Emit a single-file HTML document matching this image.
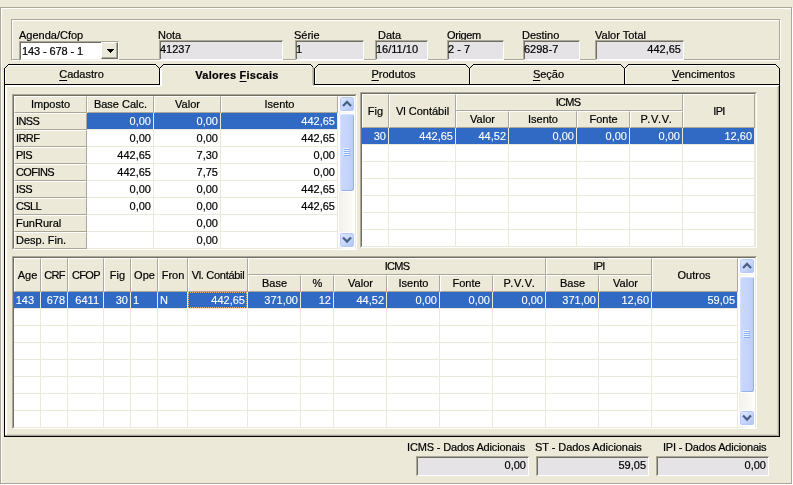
<!DOCTYPE html>
<html><head><meta charset="utf-8"><title>Valores Fiscais</title>
<style>
html,body{margin:0;padding:0;background:#ECE9D8;}
body{width:793px;height:485px;background:#ECE9D8;position:relative;overflow:hidden;
font-family:"Liberation Sans",sans-serif;font-size:11px;color:#000;line-height:13px;will-change:transform;-webkit-text-stroke:0.2px;}
div{position:absolute;box-sizing:border-box;white-space:nowrap;}
.t{height:13px;}
.fld{background:#E6E3E6;border-top:2px solid;border-left:2px solid;border-right:1px solid #fff;border-bottom:1px solid #fff;
border-top-color:#ACA899;border-left-color:#ACA899;}
.fld i{position:absolute;left:-1px;top:-1px;right:0;bottom:0;border-top:1px solid #716F64;border-left:1px solid #716F64;}
.fld span{position:absolute;top:1px;font-style:normal;}
.hd{background:#ECE9D8;border-top:1px solid #fff;border-left:1px solid #fff;border-right:1px solid #ACA899;border-bottom:1px solid #ACA899;text-align:center;}
.c{background:#fff;border-right:1px solid #ECE9D8;border-bottom:1px solid #ECE9D8;text-align:right;padding-right:2px;line-height:17px;}
.cs{-webkit-text-stroke:0.1px;background:#316AC5;color:#fff;border-right:1px solid #ECE9D8;border-bottom:1px solid #ECE9D8;text-align:right;padding-right:2px;line-height:17px;}
.l{text-align:left;padding-left:2px;}
.fx{background:#ECE9D8;border-right:1px solid #ACA899;border-bottom:1px solid #ACA899;border-top:1px solid #fff;border-left:1px solid #fff;text-align:left;padding-left:1px;line-height:14px;}
u{text-decoration:underline;text-underline-offset:2px;text-decoration-thickness:1px;}
</style></head><body>

<div style="left:1px;top:8px;width:792px;height:477px;border:1px solid #fff;"></div>
<div style="left:0px;top:7px;width:792px;height:477px;border:1px solid #ACA899;"></div>
<div style="left:12px;top:20px;width:769px;height:41px;border:1px solid #fff;"></div>
<div style="left:11px;top:19px;width:769px;height:41px;border:1px solid #ACA899;"></div>
<div class="t" style="left:19px;top:29px;">Agenda/Cfop</div>
<div style="left:19px;top:41px;width:100px;height:20px;background:#fff;border-top:1px solid #ACA899;border-left:1px solid #ACA899;border-right:1px solid #fff;border-bottom:1px solid #fff;"></div>
<div style="left:20px;top:42px;width:98px;height:18px;border-top:1px solid #716F64;border-left:1px solid #716F64;border-right:1px solid #F1EFE2;border-bottom:1px solid #F1EFE2;"></div>
<div class="t" style="left:22px;top:45px;letter-spacing:-0.1px;">143 - 678 - 1</div>
<div style="left:101px;top:42px;width:17px;height:17px;background:#ECE9D8;border-top:1px solid #fff;border-left:1px solid #fff;border-right:1px solid #716F64;border-bottom:1px solid #716F64;"></div>
<div style="left:102px;top:43px;width:15px;height:15px;border-right:1px solid #ACA899;border-bottom:1px solid #ACA899;"></div>
<svg style="position:absolute;left:107px;top:49px" width="7" height="4" shape-rendering="crispEdges"><path d="M0 0h7v1h-7zM1 1h5v1h-5zM2 2h3v1h-3zM3 3h1v1h-1z" fill="#000"/></svg>
<div class="t" style="left:158px;top:29px;">Nota</div>
<div class="fld" style="left:159px;top:40px;width:124px;height:20px;"><i></i><span style="left:-1px">41237</span></div>
<div class="t" style="left:294px;top:29px;">Série</div>
<div class="fld" style="left:295px;top:40px;width:69px;height:20px;"><i></i><span style="left:-1px">1</span></div>
<div class="t" style="left:378px;top:29px;">Data</div>
<div class="fld" style="left:375px;top:40px;width:53px;height:20px;"><i></i><span style="left:-1px">16/11/10</span></div>
<div class="t" style="left:447px;top:29px;letter-spacing:-0.4px;">Origem</div>
<div class="fld" style="left:447px;top:40px;width:57px;height:20px;"><i></i><span style="left:-1px">2 - 7</span></div>
<div class="t" style="left:522px;top:29px;">Destino</div>
<div class="fld" style="left:523px;top:40px;width:57px;height:20px;"><i></i><span style="left:-1px">6298-7</span></div>
<div class="t" style="left:595px;top:29px;">Valor Total</div>
<div class="fld" style="left:595px;top:40px;width:89px;height:20px;"><i></i><span style="right:2px">442,65</span></div>
<div class="t" style="left:4px;top:68px;width:155px;height:13px;text-align:center;"><u>C</u>adastro</div>
<div class="t" style="left:160px;top:69px;width:154px;height:13px;text-align:center;font-weight:bold;letter-spacing:0.25px;">Valores <u>F</u>iscais</div>
<div class="t" style="left:316px;top:68px;width:155px;height:13px;text-align:center;"><u>P</u>rodutos</div>
<div class="t" style="left:471px;top:68px;width:155px;height:13px;text-align:center;"><u>S</u>eção</div>
<div class="t" style="left:626px;top:68px;width:155px;height:13px;text-align:center;"><u>V</u>encimentos</div>
<svg style="position:absolute;left:0;top:0" width="793" height="485" shape-rendering="crispEdges">
<rect x="8" y="64" width="148" height="1" fill="#000"/>
<rect x="163" y="64" width="148" height="1" fill="#000"/>
<rect x="318" y="64" width="148" height="1" fill="#000"/>
<rect x="473" y="64" width="148" height="1" fill="#000"/>
<rect x="628" y="64" width="148" height="1" fill="#000"/>
<rect x="5" y="67" width="1" height="1" fill="#000"/>
<rect x="6" y="66" width="1" height="1" fill="#000"/>
<rect x="7" y="65" width="1" height="1" fill="#000"/>
<rect x="778" y="67" width="1" height="1" fill="#000"/>
<rect x="777" y="66" width="1" height="1" fill="#000"/>
<rect x="776" y="65" width="1" height="1" fill="#000"/>
<rect x="158" y="67" width="1" height="1" fill="#000"/>
<rect x="160" y="67" width="1" height="1" fill="#000"/>
<rect x="157" y="66" width="1" height="1" fill="#000"/>
<rect x="161" y="66" width="1" height="1" fill="#000"/>
<rect x="156" y="65" width="1" height="1" fill="#000"/>
<rect x="162" y="65" width="1" height="1" fill="#000"/>
<rect x="313" y="67" width="1" height="1" fill="#000"/>
<rect x="315" y="67" width="1" height="1" fill="#000"/>
<rect x="312" y="66" width="1" height="1" fill="#000"/>
<rect x="316" y="66" width="1" height="1" fill="#000"/>
<rect x="311" y="65" width="1" height="1" fill="#000"/>
<rect x="317" y="65" width="1" height="1" fill="#000"/>
<rect x="468" y="67" width="1" height="1" fill="#000"/>
<rect x="470" y="67" width="1" height="1" fill="#000"/>
<rect x="467" y="66" width="1" height="1" fill="#000"/>
<rect x="471" y="66" width="1" height="1" fill="#000"/>
<rect x="466" y="65" width="1" height="1" fill="#000"/>
<rect x="472" y="65" width="1" height="1" fill="#000"/>
<rect x="623" y="67" width="1" height="1" fill="#000"/>
<rect x="625" y="67" width="1" height="1" fill="#000"/>
<rect x="622" y="66" width="1" height="1" fill="#000"/>
<rect x="626" y="66" width="1" height="1" fill="#000"/>
<rect x="621" y="65" width="1" height="1" fill="#000"/>
<rect x="627" y="65" width="1" height="1" fill="#000"/>
<rect x="4" y="68" width="1" height="369" fill="#000"/>
<rect x="779" y="68" width="1" height="369" fill="#000"/>
<rect x="159" y="68" width="1" height="17" fill="#000"/>
<rect x="314" y="68" width="1" height="17" fill="#000"/>
<rect x="469" y="68" width="1" height="17" fill="#000"/>
<rect x="624" y="68" width="1" height="17" fill="#000"/>
<rect x="4" y="84" width="156" height="1" fill="#000"/>
<rect x="314" y="84" width="466" height="1" fill="#000"/>
<rect x="4" y="436" width="776" height="1" fill="#000"/>
<rect x="5" y="85" width="155" height="2" fill="#fff"/>
<rect x="312" y="85" width="467" height="2" fill="#fff"/>
<rect x="5" y="85" width="2" height="351" fill="#fff"/>
<rect x="777" y="87" width="1" height="348" fill="#D6D2C2"/>
<rect x="778" y="86" width="1" height="350" fill="#ACA899"/>
<rect x="5" y="435" width="774" height="1" fill="#ACA899"/>
<rect x="7" y="434" width="771" height="1" fill="#D6D2C2"/>
<rect x="160" y="68" width="2" height="18" fill="#fff"/>
<rect x="312" y="67" width="1" height="18" fill="#C5C2B2"/>
<rect x="313" y="67" width="1" height="19" fill="#ACA899"/>
<rect x="8" y="65" width="148" height="1" fill="#fff"/>
<rect x="164" y="65" width="146" height="1" fill="#fff"/>
<rect x="319" y="65" width="147" height="1" fill="#fff"/>
<rect x="474" y="65" width="147" height="1" fill="#fff"/>
<rect x="629" y="65" width="147" height="1" fill="#fff"/>
<rect x="5" y="68" width="1" height="16" fill="#fff"/>
<rect x="315" y="68" width="1" height="16" fill="#fff"/>
<rect x="470" y="68" width="1" height="16" fill="#fff"/>
<rect x="625" y="68" width="1" height="16" fill="#fff"/>
</svg>
<div style="left:12px;top:94px;width:345px;height:156px;border-top:1px solid #ACA899;border-left:1px solid #ACA899;border-right:1px solid #fff;border-bottom:1px solid #fff;background:#fff;"></div>
<div style="left:13px;top:95px;width:343px;height:154px;border-top:1px solid #716F64;border-left:1px solid #716F64;border-right:1px solid #ECE9D8;border-bottom:1px solid #ECE9D8;"></div>
<div class="hd" style="left:14px;top:96px;width:73px;height:17px;line-height:15px;">Imposto</div>
<div class="hd" style="left:87px;top:96px;width:67px;height:17px;line-height:15px;">Base Calc.</div>
<div class="hd" style="left:154px;top:96px;width:67px;height:17px;line-height:15px;">Valor</div>
<div class="hd" style="left:221px;top:96px;width:117px;height:17px;line-height:15px;">Isento</div>
<div class="fx" style="left:14px;top:113px;width:73px;height:17px;letter-spacing:-0.6px;">INSS</div>
<div class="cs" style="left:87px;top:113px;width:67px;height:17px;">0,00</div>
<div class="cs" style="left:154px;top:113px;width:67px;height:17px;">0,00</div>
<div class="cs" style="left:221px;top:113px;width:117px;height:17px;">442,65</div>
<div class="fx" style="left:14px;top:130px;width:73px;height:17px;letter-spacing:-0.6px;">IRRF</div>
<div class="c" style="left:87px;top:130px;width:67px;height:17px;">0,00</div>
<div class="c" style="left:154px;top:130px;width:67px;height:17px;">0,00</div>
<div class="c" style="left:221px;top:130px;width:117px;height:17px;">442,65</div>
<div class="fx" style="left:14px;top:147px;width:73px;height:17px;letter-spacing:-0.6px;">PIS</div>
<div class="c" style="left:87px;top:147px;width:67px;height:17px;">442,65</div>
<div class="c" style="left:154px;top:147px;width:67px;height:17px;">7,30</div>
<div class="c" style="left:221px;top:147px;width:117px;height:17px;">0,00</div>
<div class="fx" style="left:14px;top:164px;width:73px;height:17px;letter-spacing:-0.6px;">COFINS</div>
<div class="c" style="left:87px;top:164px;width:67px;height:17px;">442,65</div>
<div class="c" style="left:154px;top:164px;width:67px;height:17px;">7,75</div>
<div class="c" style="left:221px;top:164px;width:117px;height:17px;">0,00</div>
<div class="fx" style="left:14px;top:181px;width:73px;height:17px;letter-spacing:-0.6px;">ISS</div>
<div class="c" style="left:87px;top:181px;width:67px;height:17px;">0,00</div>
<div class="c" style="left:154px;top:181px;width:67px;height:17px;">0,00</div>
<div class="c" style="left:221px;top:181px;width:117px;height:17px;">442,65</div>
<div class="fx" style="left:14px;top:198px;width:73px;height:17px;letter-spacing:-0.6px;">CSLL</div>
<div class="c" style="left:87px;top:198px;width:67px;height:17px;">0,00</div>
<div class="c" style="left:154px;top:198px;width:67px;height:17px;">0,00</div>
<div class="c" style="left:221px;top:198px;width:117px;height:17px;">442,65</div>
<div class="fx" style="left:14px;top:215px;width:73px;height:17px;">FunRural</div>
<div class="c" style="left:87px;top:215px;width:67px;height:17px;"></div>
<div class="c" style="left:154px;top:215px;width:67px;height:17px;">0,00</div>
<div class="c" style="left:221px;top:215px;width:117px;height:17px;"></div>
<div class="fx" style="left:14px;top:232px;width:73px;height:17px;">Desp. Fin.</div>
<div class="c" style="left:87px;top:232px;width:67px;height:17px;"></div>
<div class="c" style="left:154px;top:232px;width:67px;height:17px;">0,00</div>
<div class="c" style="left:221px;top:232px;width:117px;height:17px;"></div>
<div style="left:339px;top:96px;width:16px;height:153px;background:linear-gradient(90deg,#F3F1EC,#FEFEFB);"></div>
<div style="left:339px;top:96px;width:16px;height:16px;background:linear-gradient(135deg,#E1EAFE,#C3D3FD 60%,#AEC0F5);border:1px solid #fff;border-radius:3px;box-shadow:inset 0 0 0 1px #B7CAF5;"></div>
<svg style="position:absolute;left:342px;top:100px" width="10" height="8"><path d="M1 6L5 2L9 6" stroke="#4D6185" stroke-width="2.3" fill="none"/></svg>
<div style="left:339px;top:232px;width:16px;height:16px;background:linear-gradient(135deg,#E1EAFE,#C3D3FD 60%,#AEC0F5);border:1px solid #fff;border-radius:3px;box-shadow:inset 0 0 0 1px #B7CAF5;"></div>
<svg style="position:absolute;left:342px;top:236px" width="10" height="8"><path d="M1 1.5L5 5.5L9 1.5" stroke="#4D6185" stroke-width="2.3" fill="none"/></svg>
<div style="left:339px;top:113px;width:16px;height:79px;background:linear-gradient(90deg,#CBD9FE,#C4D3FB 60%,#BBCBF6);border:1px solid #fff;border-radius:3px;box-shadow:inset -1px -1px 0 0 #98B1E4, inset 1px 1px 0 0 #D6E1FF;"></div>
<svg style="position:absolute;left:343px;top:148px" width="7" height="8" shape-rendering="crispEdges"><path d="M0 0.5H6" stroke="#EEF4FE"/><path d="M1 1.5H7" stroke="#8CB0F8"/><path d="M0 2.5H6" stroke="#EEF4FE"/><path d="M1 3.5H7" stroke="#8CB0F8"/><path d="M0 4.5H6" stroke="#EEF4FE"/><path d="M1 5.5H7" stroke="#8CB0F8"/><path d="M0 6.5H6" stroke="#EEF4FE"/><path d="M1 7.5H7" stroke="#8CB0F8"/></svg>
<div style="left:360px;top:92px;width:397px;height:156px;border-top:1px solid #ACA899;border-left:1px solid #ACA899;border-right:1px solid #fff;border-bottom:1px solid #fff;background:#fff;"></div>
<div style="left:361px;top:93px;width:395px;height:154px;border-top:1px solid #716F64;border-left:1px solid #716F64;border-right:1px solid #ECE9D8;border-bottom:1px solid #ECE9D8;"></div>
<div class="hd" style="left:362px;top:94px;width:27px;height:34px;line-height:32px;">Fig</div>
<div class="hd" style="left:389px;top:94px;width:67px;height:34px;line-height:32px;">Vl Contábil</div>
<div class="hd" style="left:456px;top:94px;width:227px;height:17px;line-height:15px;"><span style="letter-spacing:-0.7px;padding-right:3px">ICMS</span></div>
<div class="hd" style="left:456px;top:111px;width:53px;height:17px;line-height:15px;">Valor</div>
<div class="hd" style="left:509px;top:111px;width:68px;height:17px;line-height:15px;">Isento</div>
<div class="hd" style="left:577px;top:111px;width:53px;height:17px;line-height:15px;">Fonte</div>
<div class="hd" style="left:630px;top:111px;width:53px;height:17px;line-height:15px;"><span style="letter-spacing:0.7px">P.V.V.</span></div>
<div class="hd" style="left:683px;top:94px;width:72px;height:34px;line-height:32px;"><span style="letter-spacing:-0.7px">IPI</span></div>
<div class="cs" style="left:362px;top:128px;width:27px;height:17px;">30</div>
<div class="cs" style="left:389px;top:128px;width:67px;height:17px;">442,65</div>
<div class="cs" style="left:456px;top:128px;width:53px;height:17px;">44,52</div>
<div class="cs" style="left:509px;top:128px;width:68px;height:17px;">0,00</div>
<div class="cs" style="left:577px;top:128px;width:53px;height:17px;">0,00</div>
<div class="cs" style="left:630px;top:128px;width:53px;height:17px;">0,00</div>
<div class="cs" style="left:683px;top:128px;width:72px;height:17px;">12,60</div>
<div class="c" style="left:362px;top:145px;width:27px;height:17px;"></div>
<div class="c" style="left:389px;top:145px;width:67px;height:17px;"></div>
<div class="c" style="left:456px;top:145px;width:53px;height:17px;"></div>
<div class="c" style="left:509px;top:145px;width:68px;height:17px;"></div>
<div class="c" style="left:577px;top:145px;width:53px;height:17px;"></div>
<div class="c" style="left:630px;top:145px;width:53px;height:17px;"></div>
<div class="c" style="left:683px;top:145px;width:72px;height:17px;"></div>
<div class="c" style="left:362px;top:162px;width:27px;height:17px;"></div>
<div class="c" style="left:389px;top:162px;width:67px;height:17px;"></div>
<div class="c" style="left:456px;top:162px;width:53px;height:17px;"></div>
<div class="c" style="left:509px;top:162px;width:68px;height:17px;"></div>
<div class="c" style="left:577px;top:162px;width:53px;height:17px;"></div>
<div class="c" style="left:630px;top:162px;width:53px;height:17px;"></div>
<div class="c" style="left:683px;top:162px;width:72px;height:17px;"></div>
<div class="c" style="left:362px;top:179px;width:27px;height:17px;"></div>
<div class="c" style="left:389px;top:179px;width:67px;height:17px;"></div>
<div class="c" style="left:456px;top:179px;width:53px;height:17px;"></div>
<div class="c" style="left:509px;top:179px;width:68px;height:17px;"></div>
<div class="c" style="left:577px;top:179px;width:53px;height:17px;"></div>
<div class="c" style="left:630px;top:179px;width:53px;height:17px;"></div>
<div class="c" style="left:683px;top:179px;width:72px;height:17px;"></div>
<div class="c" style="left:362px;top:196px;width:27px;height:17px;"></div>
<div class="c" style="left:389px;top:196px;width:67px;height:17px;"></div>
<div class="c" style="left:456px;top:196px;width:53px;height:17px;"></div>
<div class="c" style="left:509px;top:196px;width:68px;height:17px;"></div>
<div class="c" style="left:577px;top:196px;width:53px;height:17px;"></div>
<div class="c" style="left:630px;top:196px;width:53px;height:17px;"></div>
<div class="c" style="left:683px;top:196px;width:72px;height:17px;"></div>
<div class="c" style="left:362px;top:213px;width:27px;height:17px;"></div>
<div class="c" style="left:389px;top:213px;width:67px;height:17px;"></div>
<div class="c" style="left:456px;top:213px;width:53px;height:17px;"></div>
<div class="c" style="left:509px;top:213px;width:68px;height:17px;"></div>
<div class="c" style="left:577px;top:213px;width:53px;height:17px;"></div>
<div class="c" style="left:630px;top:213px;width:53px;height:17px;"></div>
<div class="c" style="left:683px;top:213px;width:72px;height:17px;"></div>
<div class="c" style="left:362px;top:230px;width:27px;height:17px;"></div>
<div class="c" style="left:389px;top:230px;width:67px;height:17px;"></div>
<div class="c" style="left:456px;top:230px;width:53px;height:17px;"></div>
<div class="c" style="left:509px;top:230px;width:68px;height:17px;"></div>
<div class="c" style="left:577px;top:230px;width:53px;height:17px;"></div>
<div class="c" style="left:630px;top:230px;width:53px;height:17px;"></div>
<div class="c" style="left:683px;top:230px;width:72px;height:17px;"></div>
<div style="left:12px;top:256px;width:745px;height:173px;border-top:1px solid #ACA899;border-left:1px solid #ACA899;border-right:1px solid #fff;border-bottom:1px solid #fff;background:#fff;"></div>
<div style="left:13px;top:257px;width:743px;height:171px;border-top:1px solid #716F64;border-left:1px solid #716F64;border-right:1px solid #ECE9D8;border-bottom:1px solid #ECE9D8;"></div>
<div class="hd" style="left:14px;top:258px;width:27px;height:34px;line-height:32px;">Age</div>
<div class="hd" style="left:41px;top:258px;width:27px;height:34px;line-height:32px;"><span style="letter-spacing:-0.7px">CRF</span></div>
<div class="hd" style="left:68px;top:258px;width:36px;height:34px;line-height:32px;"><span style="letter-spacing:-0.7px">CFOP</span></div>
<div class="hd" style="left:104px;top:258px;width:27px;height:34px;line-height:32px;">Fig</div>
<div class="hd" style="left:131px;top:258px;width:27px;height:34px;line-height:32px;">Ope</div>
<div class="hd" style="left:158px;top:258px;width:30px;height:34px;line-height:32px;">Fron</div>
<div class="hd" style="left:188px;top:258px;width:60px;height:34px;line-height:32px;"><span style="letter-spacing:-0.3px">Vl. Contábil</span></div>
<div class="hd" style="left:248px;top:258px;width:298px;height:17px;line-height:15px;"><span style="letter-spacing:-0.7px">ICMS</span></div>
<div class="hd" style="left:248px;top:275px;width:53px;height:17px;line-height:15px;">Base</div>
<div class="hd" style="left:301px;top:275px;width:33px;height:17px;line-height:15px;">%</div>
<div class="hd" style="left:334px;top:275px;width:53px;height:17px;line-height:15px;">Valor</div>
<div class="hd" style="left:387px;top:275px;width:53px;height:17px;line-height:15px;">Isento</div>
<div class="hd" style="left:440px;top:275px;width:53px;height:17px;line-height:15px;">Fonte</div>
<div class="hd" style="left:493px;top:275px;width:53px;height:17px;line-height:15px;"><span style="letter-spacing:0.7px">P.V.V.</span></div>
<div class="hd" style="left:546px;top:258px;width:106px;height:17px;line-height:15px;"><span style="letter-spacing:-0.7px">IPI</span></div>
<div class="hd" style="left:546px;top:275px;width:53px;height:17px;line-height:15px;">Base</div>
<div class="hd" style="left:599px;top:275px;width:53px;height:17px;line-height:15px;">Valor</div>
<div class="hd" style="left:652px;top:258px;width:86px;height:34px;line-height:32px;"><span style="padding-right:2px">Outros</span></div>
<div class="cs" style="left:14px;top:292px;width:27px;height:17px;padding-right:6px;">143</div>
<div class="cs" style="left:41px;top:292px;width:27px;height:17px;">678</div>
<div class="cs" style="left:68px;top:292px;width:36px;height:17px;padding-right:4px;">6411</div>
<div class="cs" style="left:104px;top:292px;width:27px;height:17px;">30</div>
<div class="cs l" style="left:131px;top:292px;width:27px;height:17px;">1</div>
<div class="cs l" style="left:158px;top:292px;width:30px;height:17px;">N</div>
<div class="cs" style="left:188px;top:292px;width:60px;height:17px;">442,65</div>
<div class="cs" style="left:248px;top:292px;width:53px;height:17px;">371,00</div>
<div class="cs" style="left:301px;top:292px;width:33px;height:17px;">12</div>
<div class="cs" style="left:334px;top:292px;width:53px;height:17px;">44,52</div>
<div class="cs" style="left:387px;top:292px;width:53px;height:17px;">0,00</div>
<div class="cs" style="left:440px;top:292px;width:53px;height:17px;">0,00</div>
<div class="cs" style="left:493px;top:292px;width:53px;height:17px;">0,00</div>
<div class="cs" style="left:546px;top:292px;width:53px;height:17px;">371,00</div>
<div class="cs" style="left:599px;top:292px;width:53px;height:17px;">12,60</div>
<div class="cs" style="left:652px;top:292px;width:86px;height:17px;">59,05</div>
<div class="c" style="left:14px;top:309px;width:27px;height:17px;padding-right:6px;"></div>
<div class="c" style="left:41px;top:309px;width:27px;height:17px;"></div>
<div class="c" style="left:68px;top:309px;width:36px;height:17px;padding-right:4px;"></div>
<div class="c" style="left:104px;top:309px;width:27px;height:17px;"></div>
<div class="c l" style="left:131px;top:309px;width:27px;height:17px;"></div>
<div class="c l" style="left:158px;top:309px;width:30px;height:17px;"></div>
<div class="c" style="left:188px;top:309px;width:60px;height:17px;"></div>
<div class="c" style="left:248px;top:309px;width:53px;height:17px;"></div>
<div class="c" style="left:301px;top:309px;width:33px;height:17px;"></div>
<div class="c" style="left:334px;top:309px;width:53px;height:17px;"></div>
<div class="c" style="left:387px;top:309px;width:53px;height:17px;"></div>
<div class="c" style="left:440px;top:309px;width:53px;height:17px;"></div>
<div class="c" style="left:493px;top:309px;width:53px;height:17px;"></div>
<div class="c" style="left:546px;top:309px;width:53px;height:17px;"></div>
<div class="c" style="left:599px;top:309px;width:53px;height:17px;"></div>
<div class="c" style="left:652px;top:309px;width:86px;height:17px;"></div>
<div class="c" style="left:14px;top:326px;width:27px;height:17px;padding-right:6px;"></div>
<div class="c" style="left:41px;top:326px;width:27px;height:17px;"></div>
<div class="c" style="left:68px;top:326px;width:36px;height:17px;padding-right:4px;"></div>
<div class="c" style="left:104px;top:326px;width:27px;height:17px;"></div>
<div class="c l" style="left:131px;top:326px;width:27px;height:17px;"></div>
<div class="c l" style="left:158px;top:326px;width:30px;height:17px;"></div>
<div class="c" style="left:188px;top:326px;width:60px;height:17px;"></div>
<div class="c" style="left:248px;top:326px;width:53px;height:17px;"></div>
<div class="c" style="left:301px;top:326px;width:33px;height:17px;"></div>
<div class="c" style="left:334px;top:326px;width:53px;height:17px;"></div>
<div class="c" style="left:387px;top:326px;width:53px;height:17px;"></div>
<div class="c" style="left:440px;top:326px;width:53px;height:17px;"></div>
<div class="c" style="left:493px;top:326px;width:53px;height:17px;"></div>
<div class="c" style="left:546px;top:326px;width:53px;height:17px;"></div>
<div class="c" style="left:599px;top:326px;width:53px;height:17px;"></div>
<div class="c" style="left:652px;top:326px;width:86px;height:17px;"></div>
<div class="c" style="left:14px;top:343px;width:27px;height:17px;padding-right:6px;"></div>
<div class="c" style="left:41px;top:343px;width:27px;height:17px;"></div>
<div class="c" style="left:68px;top:343px;width:36px;height:17px;padding-right:4px;"></div>
<div class="c" style="left:104px;top:343px;width:27px;height:17px;"></div>
<div class="c l" style="left:131px;top:343px;width:27px;height:17px;"></div>
<div class="c l" style="left:158px;top:343px;width:30px;height:17px;"></div>
<div class="c" style="left:188px;top:343px;width:60px;height:17px;"></div>
<div class="c" style="left:248px;top:343px;width:53px;height:17px;"></div>
<div class="c" style="left:301px;top:343px;width:33px;height:17px;"></div>
<div class="c" style="left:334px;top:343px;width:53px;height:17px;"></div>
<div class="c" style="left:387px;top:343px;width:53px;height:17px;"></div>
<div class="c" style="left:440px;top:343px;width:53px;height:17px;"></div>
<div class="c" style="left:493px;top:343px;width:53px;height:17px;"></div>
<div class="c" style="left:546px;top:343px;width:53px;height:17px;"></div>
<div class="c" style="left:599px;top:343px;width:53px;height:17px;"></div>
<div class="c" style="left:652px;top:343px;width:86px;height:17px;"></div>
<div class="c" style="left:14px;top:360px;width:27px;height:17px;padding-right:6px;"></div>
<div class="c" style="left:41px;top:360px;width:27px;height:17px;"></div>
<div class="c" style="left:68px;top:360px;width:36px;height:17px;padding-right:4px;"></div>
<div class="c" style="left:104px;top:360px;width:27px;height:17px;"></div>
<div class="c l" style="left:131px;top:360px;width:27px;height:17px;"></div>
<div class="c l" style="left:158px;top:360px;width:30px;height:17px;"></div>
<div class="c" style="left:188px;top:360px;width:60px;height:17px;"></div>
<div class="c" style="left:248px;top:360px;width:53px;height:17px;"></div>
<div class="c" style="left:301px;top:360px;width:33px;height:17px;"></div>
<div class="c" style="left:334px;top:360px;width:53px;height:17px;"></div>
<div class="c" style="left:387px;top:360px;width:53px;height:17px;"></div>
<div class="c" style="left:440px;top:360px;width:53px;height:17px;"></div>
<div class="c" style="left:493px;top:360px;width:53px;height:17px;"></div>
<div class="c" style="left:546px;top:360px;width:53px;height:17px;"></div>
<div class="c" style="left:599px;top:360px;width:53px;height:17px;"></div>
<div class="c" style="left:652px;top:360px;width:86px;height:17px;"></div>
<div class="c" style="left:14px;top:377px;width:27px;height:17px;padding-right:6px;"></div>
<div class="c" style="left:41px;top:377px;width:27px;height:17px;"></div>
<div class="c" style="left:68px;top:377px;width:36px;height:17px;padding-right:4px;"></div>
<div class="c" style="left:104px;top:377px;width:27px;height:17px;"></div>
<div class="c l" style="left:131px;top:377px;width:27px;height:17px;"></div>
<div class="c l" style="left:158px;top:377px;width:30px;height:17px;"></div>
<div class="c" style="left:188px;top:377px;width:60px;height:17px;"></div>
<div class="c" style="left:248px;top:377px;width:53px;height:17px;"></div>
<div class="c" style="left:301px;top:377px;width:33px;height:17px;"></div>
<div class="c" style="left:334px;top:377px;width:53px;height:17px;"></div>
<div class="c" style="left:387px;top:377px;width:53px;height:17px;"></div>
<div class="c" style="left:440px;top:377px;width:53px;height:17px;"></div>
<div class="c" style="left:493px;top:377px;width:53px;height:17px;"></div>
<div class="c" style="left:546px;top:377px;width:53px;height:17px;"></div>
<div class="c" style="left:599px;top:377px;width:53px;height:17px;"></div>
<div class="c" style="left:652px;top:377px;width:86px;height:17px;"></div>
<div class="c" style="left:14px;top:394px;width:27px;height:17px;padding-right:6px;"></div>
<div class="c" style="left:41px;top:394px;width:27px;height:17px;"></div>
<div class="c" style="left:68px;top:394px;width:36px;height:17px;padding-right:4px;"></div>
<div class="c" style="left:104px;top:394px;width:27px;height:17px;"></div>
<div class="c l" style="left:131px;top:394px;width:27px;height:17px;"></div>
<div class="c l" style="left:158px;top:394px;width:30px;height:17px;"></div>
<div class="c" style="left:188px;top:394px;width:60px;height:17px;"></div>
<div class="c" style="left:248px;top:394px;width:53px;height:17px;"></div>
<div class="c" style="left:301px;top:394px;width:33px;height:17px;"></div>
<div class="c" style="left:334px;top:394px;width:53px;height:17px;"></div>
<div class="c" style="left:387px;top:394px;width:53px;height:17px;"></div>
<div class="c" style="left:440px;top:394px;width:53px;height:17px;"></div>
<div class="c" style="left:493px;top:394px;width:53px;height:17px;"></div>
<div class="c" style="left:546px;top:394px;width:53px;height:17px;"></div>
<div class="c" style="left:599px;top:394px;width:53px;height:17px;"></div>
<div class="c" style="left:652px;top:394px;width:86px;height:17px;"></div>
<div class="c" style="left:14px;top:411px;width:27px;height:17px;padding-right:6px;"></div>
<div class="c" style="left:41px;top:411px;width:27px;height:17px;"></div>
<div class="c" style="left:68px;top:411px;width:36px;height:17px;padding-right:4px;"></div>
<div class="c" style="left:104px;top:411px;width:27px;height:17px;"></div>
<div class="c l" style="left:131px;top:411px;width:27px;height:17px;"></div>
<div class="c l" style="left:158px;top:411px;width:30px;height:17px;"></div>
<div class="c" style="left:188px;top:411px;width:60px;height:17px;"></div>
<div class="c" style="left:248px;top:411px;width:53px;height:17px;"></div>
<div class="c" style="left:301px;top:411px;width:33px;height:17px;"></div>
<div class="c" style="left:334px;top:411px;width:53px;height:17px;"></div>
<div class="c" style="left:387px;top:411px;width:53px;height:17px;"></div>
<div class="c" style="left:440px;top:411px;width:53px;height:17px;"></div>
<div class="c" style="left:493px;top:411px;width:53px;height:17px;"></div>
<div class="c" style="left:546px;top:411px;width:53px;height:17px;"></div>
<div class="c" style="left:599px;top:411px;width:53px;height:17px;"></div>
<div class="c" style="left:652px;top:411px;width:86px;height:17px;"></div>
<div style="left:188px;top:292px;width:59px;height:16px;border:1px dotted #E8B860;"></div>
<div style="left:739px;top:258px;width:16px;height:170px;background:linear-gradient(90deg,#F3F1EC,#FEFEFB);"></div>
<div style="left:739px;top:258px;width:16px;height:16px;background:linear-gradient(135deg,#E1EAFE,#C3D3FD 60%,#AEC0F5);border:1px solid #fff;border-radius:3px;box-shadow:inset 0 0 0 1px #B7CAF5;"></div>
<svg style="position:absolute;left:742px;top:262px" width="10" height="8"><path d="M1 6L5 2L9 6" stroke="#4D6185" stroke-width="2.3" fill="none"/></svg>
<div style="left:739px;top:410px;width:16px;height:16px;background:linear-gradient(135deg,#E1EAFE,#C3D3FD 60%,#AEC0F5);border:1px solid #fff;border-radius:3px;box-shadow:inset 0 0 0 1px #B7CAF5;"></div>
<svg style="position:absolute;left:742px;top:414px" width="10" height="8"><path d="M1 1.5L5 5.5L9 1.5" stroke="#4D6185" stroke-width="2.3" fill="none"/></svg>
<div style="left:739px;top:276px;width:16px;height:117px;background:linear-gradient(90deg,#CBD9FE,#C4D3FB 60%,#BBCBF6);border:1px solid #fff;border-radius:3px;box-shadow:inset -1px -1px 0 0 #98B1E4, inset 1px 1px 0 0 #D6E1FF;"></div>
<svg style="position:absolute;left:743px;top:330px" width="7" height="8" shape-rendering="crispEdges"><path d="M0 0.5H6" stroke="#EEF4FE"/><path d="M1 1.5H7" stroke="#8CB0F8"/><path d="M0 2.5H6" stroke="#EEF4FE"/><path d="M1 3.5H7" stroke="#8CB0F8"/><path d="M0 4.5H6" stroke="#EEF4FE"/><path d="M1 5.5H7" stroke="#8CB0F8"/><path d="M0 6.5H6" stroke="#EEF4FE"/><path d="M1 7.5H7" stroke="#8CB0F8"/></svg>
<div class="t" style="left:407px;top:441px;letter-spacing:-0.16px;">ICMS - Dados Adicionais</div>
<div class="fld" style="left:416px;top:456px;width:113px;height:20px;"><i></i><span style="right:2px">0,00</span></div>
<div class="t" style="left:535px;top:441px;letter-spacing:-0.06px;">ST - Dados Adicionais</div>
<div class="fld" style="left:536px;top:456px;width:113px;height:20px;"><i></i><span style="right:2px">59,05</span></div>
<div class="t" style="left:663px;top:441px;letter-spacing:-0.19px;">IPI - Dados Adicionais</div>
<div class="fld" style="left:656px;top:456px;width:113px;height:20px;"><i></i><span style="right:2px">0,00</span></div>
</body></html>
